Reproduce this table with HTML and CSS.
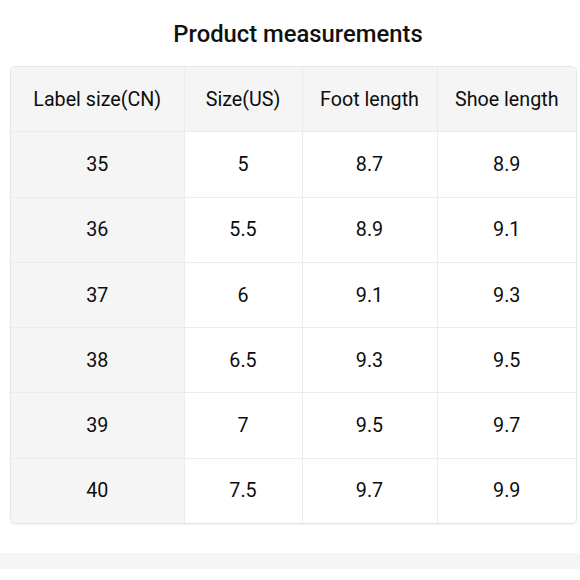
FILE: index.html
```html
<!DOCTYPE html>
<html>
<head>
<meta charset="utf-8">
<link rel="stylesheet" href="styles.css">
</head>
<body>
<div class="page">
  <h1 class="title">Product measurements</h1>
  <div class="table-wrap">
    <table class="size-table">
      <colgroup>
        <col class="c1"><col class="c2"><col class="c3"><col class="c4">
      </colgroup>
      <thead>
        <tr><th>Label size(CN)</th><th>Size(US)</th><th>Foot length</th><th>Shoe length</th></tr>
      </thead>
      <tbody>
        <tr><td class="first">35</td><td>5</td><td>8.7</td><td>8.9</td></tr>
        <tr><td class="first">36</td><td>5.5</td><td>8.9</td><td>9.1</td></tr>
        <tr><td class="first">37</td><td>6</td><td>9.1</td><td>9.3</td></tr>
        <tr><td class="first">38</td><td>6.5</td><td>9.3</td><td>9.5</td></tr>
        <tr><td class="first">39</td><td>7</td><td>9.5</td><td>9.7</td></tr>
        <tr><td class="first">40</td><td>7.5</td><td>9.7</td><td>9.9</td></tr>
      </tbody>
    </table>
  </div>
  <div class="band"></div>
</div>
</body>
</html>
```
FILE: styles.css
```css
html, body {
  margin: 0;
  padding: 0;
  background: #ffffff;
}
body {
  font-family: Roboto, "Liberation Sans", sans-serif;
  color: #111111;
}
.page {
  width: 580px;
  height: 580px;
  display: flex;
  flex-direction: column;
}
.title {
  margin: 0;
  padding-left: 16px;
  height: 66px;
  line-height: 68px;
  text-align: center;
  font-size: 23.8px;
  font-weight: 500;
  color: #111111;
}
.table-wrap {
  margin: 0 3px 0 10px;
  border: 1px solid #e6e6e6;
  border-radius: 5px;
  overflow: hidden;
  box-shadow: 0 1px 2px rgba(0,0,0,0.06);
}
.size-table {
  width: 100%;
  border-collapse: collapse;
  table-layout: fixed;
}
.c1 { width: 173px; }
.c2 { width: 118px; }
.c3 { width: 135px; }
.c4 { width: auto; }
.size-table th,
.size-table td {
  height: 64.3px;
  padding: 0;
  text-align: center;
  font-size: 19.7px;
  font-weight: 400;
  color: #0d0d0d;
  border: 1px solid #ececec;
}
.size-table tr:first-child th,
.size-table tr:first-child td { border-top: none; }
.size-table tr:last-child td { border-bottom: none; }
.size-table th:first-child,
.size-table td:first-child { border-left: none; }
.size-table th:last-child,
.size-table td:last-child { border-right: none; }
.size-table th {
  background: #f5f5f5;
}
.size-table td.first {
  background: #f5f5f5;
}
.band {
  margin-top: 29px;
  height: 16px;
  background: #f5f5f5;
}
```
